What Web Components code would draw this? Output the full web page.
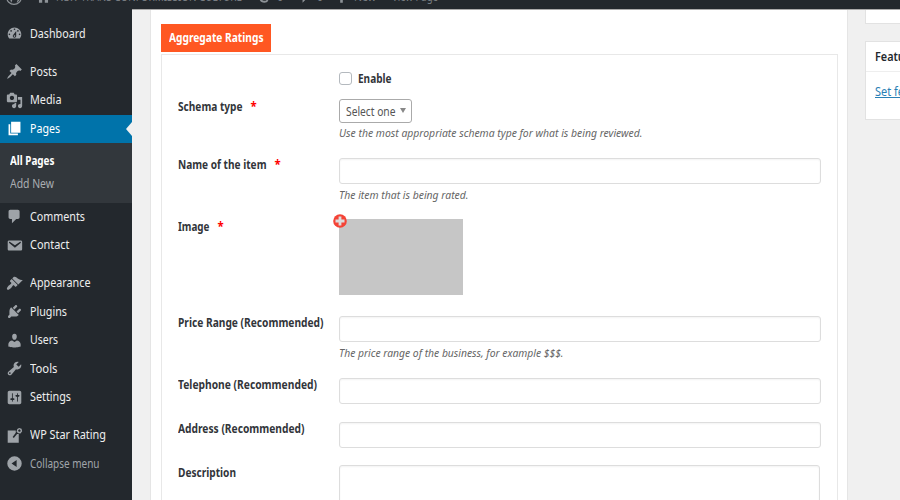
<!DOCTYPE html>
<html lang="en"><head><meta charset="utf-8"><title>Edit Page</title>
<style>html,body{margin:0;height:500px;overflow:hidden;background:#f0f0f0;font:12px/18px "Noto Sans","Open Sans",sans-serif}</style></head>
<body><wp-admin></wp-admin>
<script>
const def=(name,html,init)=>{
  const t=document.createElement('template');t.innerHTML=html;
  customElements.define(name,class extends HTMLElement{
    connectedCallback(){
      if(this.shadowRoot)return;
      this.attachShadow({mode:'open'}).append(t.content.cloneNode(true));
      if(init)init(this,this.shadowRoot);
    }});
};
const icons={
dashboard:'M3.76 16h12.48c1.1-1.37 1.76-3.11 1.76-5 0-4.42-3.58-8-8-8s-8 3.58-8 8c0 1.89.66 3.63 1.76 5zM10 4c.55 0 1 .45 1 1s-.45 1-1 1-1-.45-1-1 .45-1 1-1zM6 6c.55 0 1 .45 1 1s-.45 1-1 1-1-.45-1-1 .45-1 1-1zm8 0c.55 0 1 .45 1 1s-.45 1-1 1-1-.45-1-1 .45-1 1-1zm-5.37 5.55L12 7v6c0 1.1-.9 2-2 2s-2-.9-2-2c0-.57.24-1.08.63-1.45zM4 10c.55 0 1 .45 1 1s-.45 1-1 1-1-.45-1-1 .45-1 1-1zm12 0c.55 0 1 .45 1 1s-.45 1-1 1-1-.45-1-1 .45-1 1-1zm-5 3c0-.55-.45-1-1-1s-1 .45-1 1 .45 1 1 1 1-.45 1-1z',
post:'M10.44 3.02l1.82-1.82 6.36 6.35-1.83 1.82c-1.05-.68-2.48-.57-3.41.36l-.75.75c-.92.93-1.04 2.35-.35 3.41l-1.83 1.82-2.41-2.41-2.8 2.79c-.42.42-3.38 2.71-3.8 2.29s1.86-3.39 2.28-3.81l2.79-2.79L4.1 9.36l1.83-1.82c1.05.69 2.48.57 3.4-.36l.75-.75c.93-.92 1.05-2.35.36-3.41z',
media:'M13 11V4c0-.55-.45-1-1-1h-1.67L9 1H5L3.67 3H2c-.55 0-1 .45-1 1v7c0 .55.45 1 1 1h10c.55 0 1-.45 1-1zM7 4.5c1.38 0 2.5 1.12 2.5 2.5S8.38 9.5 7 9.5 4.5 8.38 4.5 7 5.62 4.5 7 4.5zM14 6h5v10.5c0 1.38-1.12 2.5-2.5 2.5S14 17.88 14 16.5s1.12-2.5 2.5-2.5c.17 0 .34.02.5.05V9h-3V6zm-4 8.05V13h2v3.5c0 1.38-1.12 2.5-2.5 2.5S7 17.88 7 16.5 8.12 14 9.5 14c.17 0 .34.02.5.05z',
page:'M6 15V2h11v13H6zm-1 1h9v2H3V5h2v11z',
comment:'M5 2h9c1.1 0 2 .9 2 2v7c0 1.1-.9 2-2 2h-2l-5 5v-5H5c-1.1 0-2-.9-2-2V4c0-1.1.9-2 2-2z',
mail:'M3.87 4h13.25C18.37 4 19 4.59 19 5.79v8.42c0 1.19-.63 1.79-1.88 1.79H3.87c-1.25 0-1.88-.6-1.88-1.79V5.79c0-1.2.63-1.79 1.88-1.79zm6.62 8.6l6.74-5.53c.24-.2.43-.66.13-1.07-.29-.41-.82-.42-1.17-.17l-5.7 3.86L4.8 5.83c-.35-.25-.88-.24-1.17.17-.3.41-.11.87.13 1.07z',
brush:'M14.48 11.06L7.41 3.99l1.5-1.5c.5-.56 2.3-.47 3.51.32 1.21.8 1.43 1.28 2.91 2.1 1.18.64 2.45 1.26 4.45.85zm-.71.71L6.7 4.7 4.93 6.47c-.39.39-.39 1.02 0 1.41l1.06 1.06c.39.39.39 1.03 0 1.42-.6.6-1.43 1.11-2.21 1.69-.35.26-.7.53-1.01.84C1.43 14.23.4 16.08 1.4 17.07c.99 1 2.84-.03 4.18-1.36.31-.31.58-.66.85-1.02.57-.78 1.08-1.61 1.69-2.21.39-.39 1.02-.39 1.41 0l1.06 1.06c.39.39 1.02.39 1.41 0z',
plug:'M13.11 4.36L9.87 7.6 8 5.73l3.24-3.24c.35-.34 1.05-.2 1.56.32.52.51.66 1.21.31 1.55zm-8 1.77l.91-1.12 9.01 9.01-1.19.84c-.71.71-2.63 1.16-3.82 1.16H6.14L4.9 17.26c-.59.59-1.54.59-2.12 0-.59-.58-.59-1.53 0-2.12l1.24-1.24v-3.88c0-1.13.4-3.19 1.09-3.89zm7.26 3.97l3.24-3.24c.34-.35 1.04-.21 1.55.31.52.51.66 1.21.31 1.55l-3.24 3.25z',
user:'M10 9.25c-2.27 0-2.73-3.44-2.73-3.44C7 4.02 7.82 2 9.97 2c2.16 0 2.98 2.02 2.71 3.81 0 0-.41 3.44-2.68 3.44zm0 2.57L12.72 10c2.39 0 4.52 2.33 4.52 4.53v2.49s-3.65 1.13-7.24 1.13c-3.65 0-7.24-1.13-7.24-1.13v-2.49c0-2.25 1.94-4.48 4.47-4.48z',
tools:'M16.68 9.77c-1.34 1.34-3.3 1.67-4.95.99l-5.41 6.52c-.99.99-2.59.99-3.58 0s-.99-2.59 0-3.57l6.52-5.42c-.68-1.65-.35-3.61.99-4.95 1.28-1.28 3.12-1.62 4.72-1.06l-2.89 2.89 2.82 2.82 2.86-2.87c.53 1.58.18 3.39-1.08 4.65zM3.81 16.21c.4.39 1.04.39 1.43 0 .4-.4.4-1.04 0-1.43-.39-.4-1.03-.4-1.43 0-.39.39-.39 1.03 0 1.43z',
settings:'M18 16V4c0-1.1-.9-2-2-2H4c-1.1 0-2 .9-2 2v12c0 1.1.9 2 2 2h12c1.1 0 2-.9 2-2zM8 11h1c.55 0 1 .45 1 1s-.45 1-1 1H8v1.5c0 .28-.22.5-.5.5s-.5-.22-.5-.5V13H6c-.55 0-1-.45-1-1s.45-1 1-1h1V5.5c0-.28.22-.5.5-.5s.5.22.5.5V11zm5-2h-1c-.55 0-1-.45-1-1s.45-1 1-1h1V5.5c0-.28.22-.5.5-.5s.5.22.5.5V7h1c.55 0 1 .45 1 1s-.45 1-1 1h-1v5.5c0 .28-.22.5-.5.5s-.5-.22-.5-.5V9z',
star:'M2 4H11.5V6.8L7.8 11.8L9.2 12.8L13 8.2H15V18.5H2ZM13.3 2.3L15.5 1.2L18.3 2.1L19 5L17 7.5L14.4 7.3L12.4 5.6ZM14.2 3.8L15 5.7L16.8 5.6L17.2 3.7L15.8 2.7Z',
collapse:'M10 1.5A8.5 8.5 0 1 0 10 18.5A8.5 8.5 0 1 0 10 1.5ZM12.5 5.8V14.2L6.5 10Z',
wp:'M10 0A10 10 0 1 0 10 20A10 10 0 1 0 10 0ZM10 1.5A8.5 8.5 0 1 1 10 18.5A8.5 8.5 0 1 1 10 1.5ZM2.7 6.8L6.6 17.1L8.9 11L7 5.8H5.8V5H10.5V5.8H9.3L12.2 14L13.3 10.4L11.8 5.8L14 3.9L16.3 6V9L13.2 17.3C18 14.5 18.5 10 16.9 6.3L15 3.8C11 .8 5 2 2.7 6.8Z',
home:'M10 1L19 9H17V18H12V12H8V18H3V9H1Z',
refresh:'M10 2A8 8 0 0 1 18 9H20L16.5 13L13 9H15A5 5 0 0 0 6 7L4 5A8 8 0 0 1 10 2ZM10 18A8 8 0 0 1 2 11H0L3.5 7L7 11H5A5 5 0 0 0 14 13L16 15A8 8 0 0 1 10 18Z',
plus:'M8 2H12V8H18V12H12V18H8V12H2V8H8Z'};
def('dash-icon','<style>:host{display:block;width:17px;height:17px;flex:none}svg{display:block;width:100%;height:100%;fill:currentColor}</style><svg viewBox="0 0 20 20"><path fill-rule="evenodd"/></svg>',
 (e,r)=>r.querySelector('path').setAttribute('d',icons[e.getAttribute('name')]));
/* A line of text condensed horizontally to the width in "w". */
def('text-run','<style>:host{display:inline-block;white-space:nowrap}span{display:inline-block;transform-origin:0 50%}:host([underline]) span{text-decoration:underline}</style><span><slot></slot></span>',
 (e,r)=>{const s=r.querySelector('span'),w=+e.getAttribute('w');
  const k=w/s.getBoundingClientRect().width;
  s.style.transform='scaleX('+k+')';e.style.width=w+'px';});
def('menu-item',`<style>:host{display:flex;height:28.5px;align-items:center;padding-left:6px;gap:7px;color:#9ea3a8;position:relative;box-sizing:border-box}
.t{color:#eee}:host([active]){background:#0073aa;color:#fff}:host([active]) .t{color:#fff}:host([muted]) .t{color:#a0a5aa}
:host([active])::after{content:"";position:absolute;right:0;top:7.5px;border:7px solid transparent;border-left:0;border-right:6.5px solid #f0f0f0}</style><dash-icon></dash-icon><span class="t"><slot></slot></span>`,
 (e,r)=>{const old=r.querySelector('dash-icon'),n=document.createElement('dash-icon');n.setAttribute('name',e.getAttribute('icon'));old.replaceWith(n);});
def('side-menu',`<style>:host{display:block;width:132px;flex:none;background:#23282d;padding-top:10.5px;box-sizing:border-box}
.gap{height:9.5px}.sub{background:#32373c;height:59.5px;box-sizing:border-box;padding:5.5px 0 0 10px;color:#a9aeb2;line-height:23px}.sub div{height:23px}b{color:#fff;font-weight:700}</style>
<menu-item icon="dashboard"><text-run w="55.5">Dashboard</text-run></menu-item><div class="gap"></div>
<menu-item icon="post"><text-run w="27">Posts</text-run></menu-item>
<menu-item icon="media"><text-run w="31.5">Media</text-run></menu-item>
<menu-item icon="page" active><text-run w="30">Pages</text-run></menu-item>
<div class="sub"><div><b><text-run w="44.5">All Pages</text-run></b></div><div><text-run w="44">Add New</text-run></div></div>
<menu-item icon="comment"><text-run w="55">Comments</text-run></menu-item>
<menu-item icon="mail"><text-run w="39.5">Contact</text-run></menu-item><div class="gap"></div>
<menu-item icon="brush"><text-run w="60.5">Appearance</text-run></menu-item>
<menu-item icon="plug"><text-run w="37">Plugins</text-run></menu-item>
<menu-item icon="user"><text-run w="28">Users</text-run></menu-item>
<menu-item icon="tools"><text-run w="27.5">Tools</text-run></menu-item>
<menu-item icon="settings"><text-run w="41">Settings</text-run></menu-item><div class="gap"></div>
<menu-item icon="star"><text-run w="76">WP Star Rating</text-run></menu-item>
<menu-item icon="collapse" muted><text-run w="69.5">Collapse menu</text-run></menu-item>`);
def('admin-bar',`<style>:host{display:block;height:9px;background:#23282d;overflow:hidden;color:#777c81}
.row{display:flex;margin-top:-12px;height:18px;align-items:center}dash-icon{width:16px;height:16px;color:#8d9297;flex:none}.s{width:13px;height:13px}</style>
<div class="row"><dash-icon name="wp" style="margin-left:6px"></dash-icon><dash-icon name="home" class="s" style="margin:0 6px 0 15px"></dash-icon><text-run w="186">NEW TRANS CONFORMISSION CULTURE</text-run><dash-icon name="refresh" class="s" style="margin:0 6px 0 16px"></dash-icon><text-run w="6">6</text-run><dash-icon name="comment" class="s" style="margin:0 6px 0 15px"></dash-icon><text-run w="6">0</text-run><dash-icon name="plus" class="s" style="margin:0 6px 0 12px"></dash-icon><text-run w="22">New</text-run><text-run w="46" style="margin-left:16px">View Page</text-run></div>`);
def('form-row',`<style>:host{display:flex;box-sizing:border-box}.l{width:161px;flex:none;font-weight:700;font-size:11.5px;color:#32353a;line-height:26px;height:26px}i{font-style:normal;color:red;margin-left:8px}.f{flex:1}</style><div class="l"><slot name="label"></slot></div><div class="f"><slot></slot></div>`,
 (e,r)=>{e.style.height=e.getAttribute('h')+'px';if(e.hasAttribute('required')){const i=document.createElement('i');i.textContent='*';r.querySelector('.l').append(i);}});
def('text-field',`<style>:host{display:block;box-sizing:border-box;width:482px;height:26px;margin-top:6px;border:1px solid #ddd;border-radius:3px;background:#fff;box-shadow:inset 0 1px 2px rgba(0,0,0,.05)}:host([area]){width:481px;height:60px;margin-top:5px}</style>`);
def('help-text',`<style>:host{display:block;font-style:italic;color:#666;line-height:18px;font-size:11.5px;margin-top:2px}:host([tight]){margin-top:1px}</style><slot></slot>`);
def('select-box',`<style>:host{display:flex;box-sizing:border-box;width:73px;height:24px;margin-top:5px;border:1px solid #aaa;border-radius:3px;align-items:center;padding:2px 0 0 6px;color:#555}.a{border:3.5px solid transparent;border-top:5px solid #888;border-bottom:0;margin:-3px 0 0 4px}</style><slot></slot><span class="a"></span>`);
def('check-box',`<style>:host{display:flex;align-items:center;gap:6px;margin-top:15px;font-weight:700;font-size:11.5px;color:#32353a}i{box-sizing:border-box;width:13px;height:13px;border:1px solid #b4b9be;border-radius:3px;margin-top:-1px}</style><i></i><slot></slot>`);
def('image-picker',`<style>:host{display:block;width:123.5px;height:75.5px;background:#c6c6c6;margin-top:5px;position:relative}svg{position:absolute;left:-6px;top:-5.5px;width:14px;height:14px}</style><svg viewBox="0 0 14 14"><circle cx="7" cy="7" r="6.8" fill="#f44336"/><path d="M5.6 2.5h2.8v3.1h3.1v2.8H8.4v3.1H5.6V8.4H2.5V5.6h3.1z" fill="#ddd"/></svg>`);
def('rating-panel',`<style>:host{display:block;width:698px;flex:none;box-sizing:border-box;margin-left:18px;border:1px solid #e5e5e5;border-width:0 1px;background:#fff;padding:14px 9px 0 10px}
.tab{width:110px;height:28px;background:#ff5722;color:#fff;font-weight:700;font-size:11.5px;line-height:28px;padding-left:8px;box-sizing:border-box}.box{margin-top:2px;border:1px solid #e8e8e8;height:470px;padding-left:16px}</style>
<div class="tab"><text-run w="94.5">Aggregate Ratings</text-run></div><div class="box">
<form-row h="39"><check-box><text-run w="33.5">Enable</text-run></check-box></form-row>
<form-row h="58" required><text-run slot="label" w="64.5">Schema type</text-run><select-box><text-run w="49.5">Select one</text-run></select-box><help-text tight><text-run w="303.5">Use the most appropriate schema type for what is being reviewed.</text-run></help-text></form-row>
<form-row h="62" required><text-run slot="label" w="88.5">Name of the item</text-run><text-field></text-field><help-text><text-run w="129.5">The item that is being rated.</text-run></help-text></form-row>
<form-row h="95.5" required><text-run slot="label" w="31.5">Image</text-run><image-picker></image-picker></form-row>
<form-row h="62"><text-run slot="label" w="145.5">Price Range (Recommended)</text-run><text-field></text-field><help-text><text-run w="224.5">The price range of the business, for example $$$.</text-run></help-text></form-row>
<form-row h="44.5"><text-run slot="label" w="139">Telephone (Recommended)</text-run><text-field></text-field></form-row>
<form-row h="44"><text-run slot="label" w="126.5">Address (Recommended)</text-run><text-field></text-field></form-row>
<form-row h="60"><text-run slot="label" w="58">Description</text-run><text-field area></text-field></form-row></div>`);
def('side-boxes',`<style>:host{display:block;flex:none;width:120px;margin-left:17px}.b{border:1px solid #e2e2e2;background:#fff;box-sizing:border-box}.one{height:14px;border-top:0}.two{height:79px;margin-top:17px}.h{height:29px;line-height:30px;padding-left:9px;border-bottom:1px solid #eee;color:#23282d;font-weight:600}a{display:block;padding-left:9px;margin-top:11px;color:#2980b5}</style><div class="b one"></div><div class="b two"><div class="h"><text-run w="84">Featured Image</text-run></div><a><text-run underline w="98">Set featured image</text-run></a></div>`);
def('wp-admin',`<style>:host{display:block;width:900px;height:500px;overflow:hidden}.main{display:flex;height:491px}.content{display:flex;flex:1;min-width:0;border-top:1px solid #aaa;overflow:hidden}</style><admin-bar></admin-bar><div class="main"><side-menu></side-menu><div class="content"><rating-panel></rating-panel><side-boxes></side-boxes></div></div>`);
</script></body></html>
